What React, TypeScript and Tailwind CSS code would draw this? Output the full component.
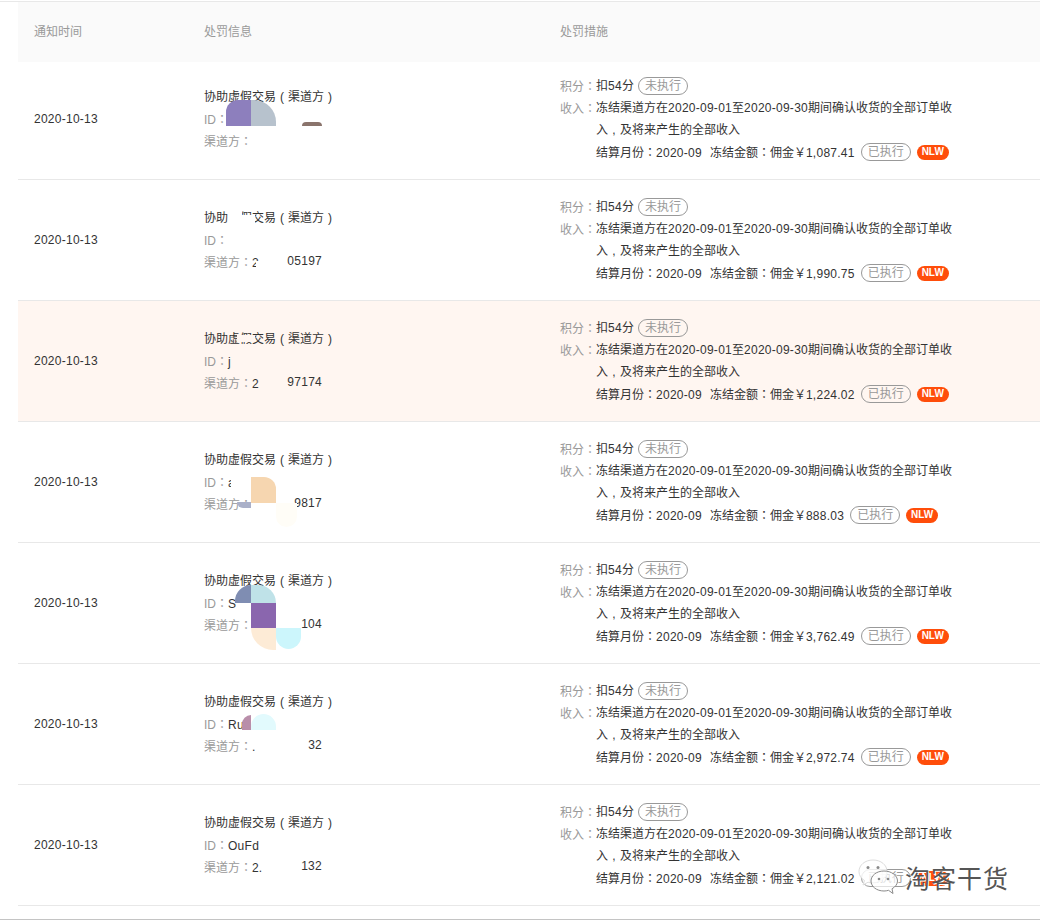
const FONT = "font-['Liberation_Sans','Noto_Sans_CJK_SC',sans-serif]";

type Blob = { x: number; y: number; w: number; h: number; c: string; r?: string };

type Row = {
  amount: string;
  id: string;
  left: string;
  right: string;
  bg?: string;
  blobs: Blob[];
};

const Colon = () => <span className="font-['Noto_Sans_CJK_TC',sans-serif]">：</span>;
const Num = ({ children }: { children: string }) => <span className="tracking-[0.26px]">{children}</span>;
const Mark = ({ children }: { children: string }) => (
  <span className="inline-block w-[12px] text-center">{children}</span>
);

const rows: Row[] = [
  {
    amount: "1,087.41",
    id: "",
    left: "",
    right: "",
    blobs: [
      { x: 51, y: 38, w: 25, h: 26, c: "#8d7fbd", r: "rounded-tl-[12px]" },
      { x: 76, y: 38, w: 25, h: 26, c: "#b7c2cd", r: "rounded-tr-[22px]" },
      { x: 127, y: 60, w: 20, h: 4, c: "#8a746c", r: "rounded-t-[10px]" },
    ],
  },
  {
    amount: "1,990.75",
    id: "",
    left: "2",
    right: "05197",
    blobs: [
      { x: 53, y: 35, w: 27, h: 8, c: "#ffffff" },
      { x: 53, y: 30, w: 14, h: 6, c: "#ffffff" },
      { x: 81, y: 81, w: 14, h: 6, c: "#ffffff" },
    ],
  },
  {
    amount: "1,224.02",
    id: "j",
    left: "2",
    right: "97174",
    bg: "bg-[#fff6f1]",
    blobs: [
      { x: 62, y: 34, w: 18, h: 7, c: "#fff6f1" },
      { x: 56, y: 62, w: 8, h: 6, c: "#fff6f1" },
    ],
  },
  {
    amount: "888.03",
    id: "a",
    left: "",
    right: "9817",
    blobs: [
      { x: 56, y: 52, w: 20, h: 14, c: "#ffffff" },
      { x: 76, y: 55, w: 25, h: 26, c: "#f6d6b0", r: "rounded-tr-[12px]" },
      { x: 62, y: 80, w: 14, h: 6, c: "#aab0c8", r: "rounded-bl-[12px]" },
      { x: 101, y: 81, w: 21, h: 24, c: "#fffdf7", r: "rounded-b-[20px]" },
    ],
  },
  {
    amount: "3,762.49",
    id: "S",
    left: ".",
    right: "104",
    blobs: [
      { x: 60, y: 42, w: 16, h: 18, c: "#7f8db2", r: "rounded-tl-[18px]" },
      { x: 76, y: 42, w: 25, h: 18, c: "#bfe2e8", r: "rounded-tr-[18px]" },
      { x: 76, y: 60, w: 25, h: 25, c: "#8a66ae" },
      { x: 76, y: 85, w: 25, h: 22, c: "#fdebd6", r: "rounded-bl-[24px]" },
      { x: 101, y: 85, w: 25, h: 21, c: "#ccf6fc", r: "rounded-b-[20px]" },
    ],
  },
  {
    amount: "2,972.74",
    id: "Ru",
    left: ".",
    right: "32",
    blobs: [
      { x: 67, y: 51, w: 9, h: 15, c: "#b98eaa", r: "rounded-tl-[12px]" },
      { x: 76, y: 50, w: 25, h: 16, c: "#e2fafd", r: "rounded-t-[16px]" },
    ],
  },
  {
    amount: "2,121.02",
    id: "OuFd",
    left: "2.",
    right: "132",
    blobs: [],
  },
];

const Tag = ({ children }: { children: string }) => (
  <span className="inline-flex h-[18px] w-[50px] items-center justify-center rounded-full border border-[#999999] text-[12px] leading-none text-[#999999]">
    {children}
  </span>
);

function TableRow({ row, first }: { row: Row; first: boolean }) {
  return (
    <div
      className={`relative flex border-b border-[#e8e8e8] ${first ? "h-[118px] pt-[13px]" : "h-[121px] pt-[16px]"} ${row.bg ?? ""}`}
    >
      <div className="flex h-[88px] w-[186px] shrink-0 items-center pl-[16px] text-[#333333]">
        <Num>2020-10-13</Num>
      </div>
      <div className="flex h-[88px] w-[356px] shrink-0 flex-col justify-center leading-[22px]">
        <div className="h-[22px] whitespace-nowrap text-[#333333]">
          协助虚假交易<Mark>(</Mark>渠道方<Mark>)</Mark>
        </div>
        <div className="h-[22px] text-[#999999]">
          ID<Colon />
          <span className="text-[#333333]"><Num>{row.id}</Num></span>
        </div>
        <div className="flex h-[22px] w-[118px] justify-between whitespace-nowrap leading-[21px] text-[#999999]">
          <span>
            渠道方<Colon />
            <span className="text-[#333333]">{row.left}</span>
          </span>
          <span className="text-[#333333]"><Num>{row.right}</Num></span>
        </div>
      </div>
      <div className="w-[400px] leading-[22px] text-[#333333]">
        <div className="flex h-[22px] items-center">
          <span className="text-[#999999]">积分<Colon /></span>
          <span>扣<Num>54</Num>分</span>
          <span className="ml-[4px] flex"><Tag>未执行</Tag></span>
        </div>
        <div className="flex">
          <span className="w-[36px] shrink-0 whitespace-nowrap text-[#999999]">收入<Colon /></span>
          <div className="whitespace-nowrap">
            <div className="h-[22px]">
              冻结渠道方在<Num>2020-09-01</Num>至<Num>2020-09-30</Num>期间确认收货的全部订单收
            </div>
            <div className="h-[22px]">
              入<Mark>,</Mark>及将来产生的全部收入
            </div>
          </div>
        </div>
        <div className="flex h-[22px] items-center whitespace-nowrap pl-[36px]">
          <span>结算月份<Colon /><Num>2020-09</Num></span>
          <span className="ml-[8px]">冻结金额<Colon />佣金￥<Num>{row.amount}</Num></span>
          <span className="ml-[6px] flex"><Tag>已执行</Tag></span>
          <span className="ml-[6px] flex h-[15px] w-[32px] items-center justify-center rounded-full bg-[#ff4d0a] text-[10px] font-bold leading-none text-white">
            NLW
          </span>
        </div>
      </div>
      {row.blobs.map((b, i) => (
        <div
          key={i}
          className={`absolute ${b.r ?? ""}`}
          style={{ left: 157 + b.x, top: b.y, width: b.w, height: b.h, backgroundColor: b.c }}
        />
      ))}
    </div>
  );
}

export default function App() {
  return (
    <div className={`relative h-[924px] w-[1040px] overflow-hidden bg-white text-[12px] ${FONT}`}>
      <div className="h-[1px]" />
      <div className="h-[1px] bg-[#e8e8e8]" />
      <div className="ml-[18px]">
        <div className="flex h-[60px] items-center bg-[#fafafa] text-[#999999]">
          <div className="w-[186px] pl-[16px]">通知时间</div>
          <div className="w-[356px]">处罚信息</div>
          <div>处罚措施</div>
        </div>
        {rows.map((r, i) => (
          <TableRow key={i} row={r} first={i === 0} />
        ))}
      </div>
      <div className="mt-[13px] h-[1px] bg-[#c4c4c4]" />
      {/* watermark */}
      <div className="absolute left-[857px] top-[859px] flex items-center">
        <svg width="42" height="36" viewBox="0 0 42 36" fill="none">
          <path
            d="M16 1C8 1 2 6 2 12.500C2 16.500 4.200 19.500 7.500 21.500L6 26L11 23.200C12.500 23.700 14 24 15.500 24C22.500 24 30 19 30 12.500C30 6 24 1 16 1Z"
            fill="#ffffffd0"
            stroke="#dddddd"
          />
          <circle cx="11" cy="8.500" r="1.500" fill="#8a8a8a" />
          <circle cx="21" cy="8.500" r="1.500" fill="#8a8a8a" />
          <path
            d="M27 12C19.500 12 14 16.500 14 22C14 27.500 19.500 32 27 32C28.500 32 30 31.800 31.500 31.300L36 34.500L35 29.800C38.500 27.800 40.500 25 40.500 22C40.500 16.500 34.500 12 27 12Z"
            fill="#ffffffb0"
            stroke="#8a8a8a"
          />
          <circle cx="22" cy="20" r="1.300" fill="#8a8a8a" />
          <circle cx="31" cy="20" r="1.300" fill="#8a8a8a" />
        </svg>
        <span className="ml-[6px] font-['Noto_Sans_CJK_SC',sans-serif] text-[25px] leading-none tracking-[1px] text-[#555555] [text-shadow:1px_1px_0_#ffffff]">
          淘客干货
        </span>
      </div>
    </div>
  );
}
